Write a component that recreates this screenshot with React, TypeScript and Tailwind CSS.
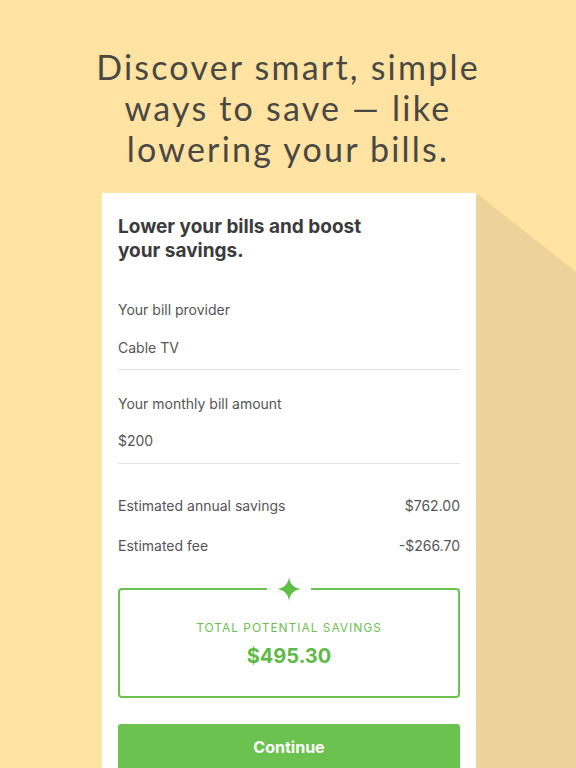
export default function App() {
  const rows = [
    { label: 'Estimated annual savings', value: '$762.00' },
    { label: 'Estimated fee', value: '-$266.70' },
  ];

  return (
    <div className="relative w-[576px] h-[768px] overflow-hidden bg-[#fee3a2]">
      {/* long shadow behind the card */}
      <svg className="absolute inset-0" width="576" height="768" viewBox="0 0 576 768">
        <polygon points="476,193 576,272 576,768 476,768" fill="#edd29a" />
      </svg>

      <div className="relative flex flex-col items-center pt-[46px]">
        <h1 className="text-center text-[34px] leading-[41px] text-[#4a4843] font-normal tracking-[0.065em] font-['Lato',sans-serif]">
          Discover smart, simple
          <br />
          ways to save — like
          <br />
          lowering your bills.
        </h1>
      </div>

      <div className="relative ml-[102px] mt-[24px] w-[374px] bg-white px-4 pt-[22px] pb-10 font-['Inter',sans-serif]">
        <h2 className="text-[19px] leading-[24px] font-bold tracking-normal text-[#3b3b3b]">
          Lower your bills and boost
          <br />
          your savings.
        </h2>

        <div className="mt-[38px] border-b border-[#e3e3e3] pb-[12px]">
          <div className="text-[14px] leading-[18px] text-[#555]">Your bill provider</div>
          <div className="mt-[20px] text-[14px] leading-[18px] text-[#555]">Cable TV</div>
        </div>

        <div className="mt-[25px] border-b border-[#e3e3e3] pb-[13px]">
          <div className="text-[14px] leading-[18px] text-[#555]">Your monthly bill amount</div>
          <div className="mt-[19px] text-[14px] leading-[18px] text-[#555]">$200</div>
        </div>

        <div className="mt-[33px] flex flex-col gap-[22px]">
          {rows.map((r) => (
            <div key={r.label} className="flex justify-between text-[14px] leading-[18px] text-[#555]">
              <span>{r.label}</span>
              <span>{r.value}</span>
            </div>
          ))}
        </div>

        <div className="relative mt-[33px] h-[110px] rounded-[4px] border-2 border-[#6cc24f] flex flex-col items-center pt-[30px]">
          <div className="absolute left-1/2 top-[-13px] -translate-x-1/2 bg-white px-[10px]">
            <svg width="24" height="24" viewBox="0 0 24 24">
              <path d="M12 0 C12.8 7 17 11.2 24 12 C17 12.8 12.8 17 12 24 C11.2 17 7 12.8 0 12 C7 11.2 11.2 7 12 0 Z" fill="#5fbe46" />
            </svg>
          </div>
          <div className="text-[12px] leading-[16px] tracking-[0.08em] text-[#6cc24f]">TOTAL POTENTIAL SAVINGS</div>
          <div className="mt-[8px] text-[20px] leading-[24px] font-bold text-[#5fb947]">$495.30</div>
        </div>

        <button className="mt-[26px] w-full h-[46px] rounded-[3px] bg-[#6cc24f] text-white text-[16px] font-bold">
          Continue
        </button>
      </div>
    </div>
  );
}
